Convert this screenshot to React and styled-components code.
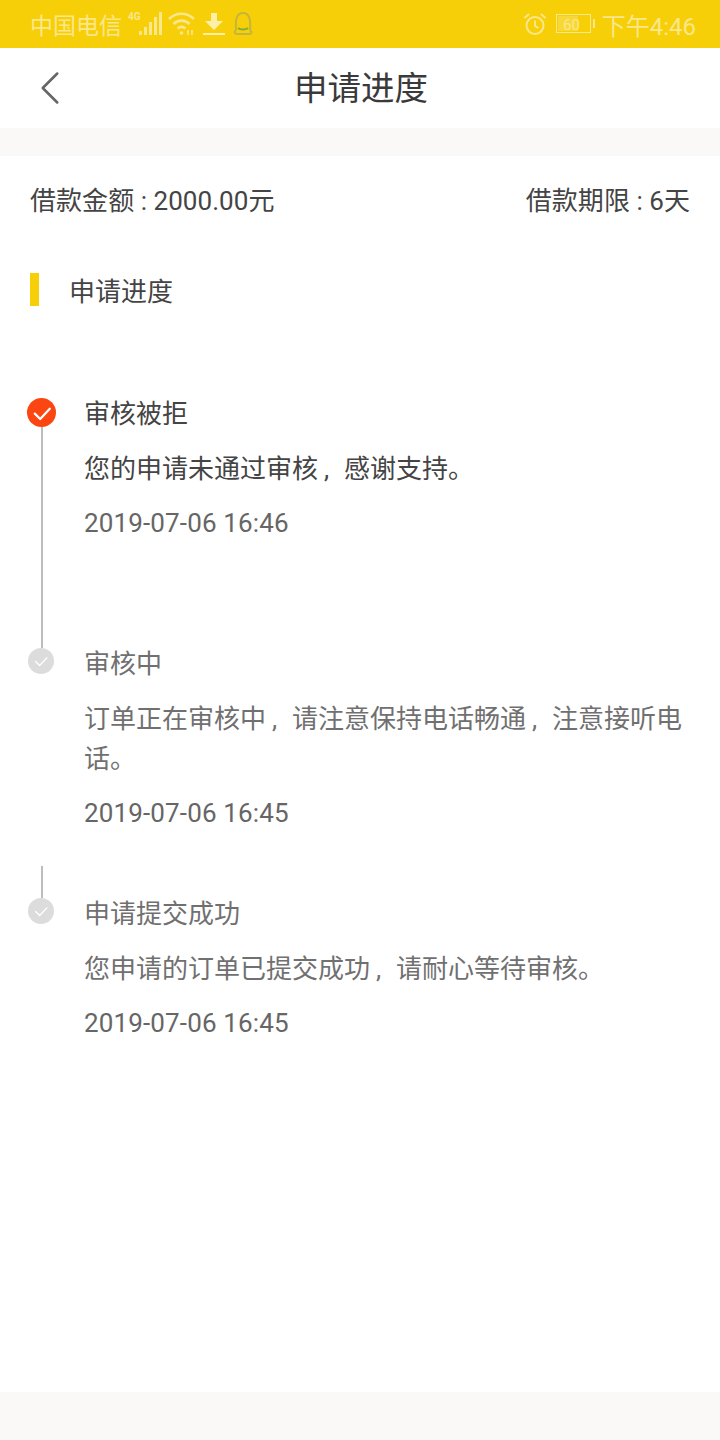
import React from 'react';
import styled, { createGlobalStyle } from 'styled-components';
import { FiChevronLeft } from 'react-icons/fi';

const GlobalStyle = createGlobalStyle`
	html, body {
		margin: 0;
		padding: 0;
		background: #ffffff;
		font-family: Roboto, "Noto Sans CJK SC", sans-serif;
	}
	* {
		box-sizing: border-box;
	}
`;

const Page = styled.div`
	width: 720px;
	height: 1440px;
	display: flex;
	flex-direction: column;
	background: #fbf8f8;
`;

const StatusBar = styled.div`
	height: 48px;
	background: #f6cf09;
	color: #fbe78b;
	display: flex;
	justify-content: space-between;
	align-items: center;
	padding: 0 24px 0 30px;
`;

const StatusGroup = styled.div`
	display: flex;
	align-items: center;
	font-size: ${(props) => props.$size || 24}px;
`;

const StatusIcon = styled.svg`
	display: block;
	margin-left: ${(props) => props.$gap || 0}px;
`;

const ClockText = styled.span`
	margin-left: 6px;
`;

const NavBar = styled.div`
	height: 80px;
	background: #ffffff;
	display: flex;
	align-items: center;
	justify-content: center;
	position: relative;
`;

const BackButton = styled.div`
	position: absolute;
	left: 21px;
	top: 11px;
	color: #666666;
	line-height: 0;
`;

const NavTitle = styled.div`
	font-size: 33.5px;
	line-height: 80px;
	padding-top: 2px;
	color: #3a3a3a;
	margin-left: 2px;
`;

const Content = styled.div`
	margin-top: 28px;
	height: 1236px;
	background: #ffffff;
	padding: 0 30px;
`;

const LoanRow = styled.div`
	height: 84px;
	display: flex;
	justify-content: space-between;
	align-items: center;
	font-size: 26px;
	letter-spacing: 0.05px;
	color: #444444;
`;

const SectionHead = styled.div`
	margin-top: 33px;
	height: 33px;
	display: flex;
	align-items: center;
	font-size: 26px;
	color: #444444;
`;

const SectionBar = styled.span`
	width: 9px;
	height: 33px;
	background: #f6cf09;
	margin-right: 30px;
`;

const Timeline = styled.div`
	margin-top: 92px;
	display: flex;
	flex-direction: column;
`;

const Step = styled.div`
	height: 250px;
	display: flex;
`;

const Marker = styled.div`
	width: 25px;
	margin-left: -2px;
	margin-right: 31px;
	display: flex;
	flex-direction: column;
	align-items: center;
	flex-shrink: 0;
`;

const Dot = styled.div`
	width: ${(props) => (props.$active ? 29 : 26)}px;
	height: ${(props) => (props.$active ? 29 : 26)}px;
	border-radius: 50%;
	background: ${(props) => (props.$active ? '#fb4612' : '#dcdcdc')};
	display: flex;
	align-items: center;
	justify-content: center;
	flex-shrink: 0;
	margin-left: ${(props) => (props.$active ? 2 : 1)}px;
`;

const Line = styled.div`
	width: 2px;
	background: #bdbdbd;
	margin-left: 2px;
	flex: ${(props) => (props.$short ? '0 0 32px' : '1')};
	margin-top: ${(props) => (props.$short ? 'auto' : '0')};
`;

const StepBody = styled.div`
	flex: 1;
	padding-top: 1px;
`;

const StepTitle = styled.div`
	font-size: 26px;
	line-height: 30px;
	color: ${(props) => (props.$active ? '#444444' : '#707070')};
`;

const StepText = styled.div`
	margin-top: 20px;
	font-size: 26px;
	line-height: 40px;
	color: ${(props) => (props.$active ? '#444444' : '#707070')};
`;

const Comma = styled.span`
	display: inline-block;
	width: 26px;
	padding-left: 6px;
`;

const StepTime = styled.div`
	margin-top: 19px;
	font-size: 26px;
	line-height: 30px;
	letter-spacing: 0.14px;
	color: #666666;
`;

const Check = ({ size, weight }) => (
	<svg width={size} height={size} viewBox="0 0 20 20" fill="none">
		<path d="M4 10.5 L8.5 15 L16.5 6.5" stroke="#ffffff" strokeWidth={weight} strokeLinecap="round" strokeLinejoin="round" />
	</svg>
);

// the comma is drawn as a narrow one inside a full CJK cell
const withCommas = (text) =>
	text.split('，').map((part, index) => (
		<React.Fragment key={part}>
			{index > 0 && <Comma>,</Comma>}
			{part}
		</React.Fragment>
	));

const steps = [
	{ title: '审核被拒', text: '您的申请未通过审核，感谢支持。', time: '2019-07-06 16:46', active: true },
	{ title: '审核中', text: '订单正在审核中，请注意保持电话畅通，注意接听电话。', time: '2019-07-06 16:45', short: true },
	{ title: '申请提交成功', text: '您申请的订单已提交成功，请耐心等待审核。', time: '2019-07-06 16:45', last: true },
];

const App = () => {
	return (
		<Page>
			<GlobalStyle />
			<StatusBar>
				<StatusGroup $size={23}>
					中国电信
					<StatusIcon $gap={6} width="36" height="30" viewBox="0 0 36 30" fill="#fbe78b">
						<text x="0" y="11" fontSize="10" fontWeight="700" fontFamily="Roboto, sans-serif">4G</text>
						<rect x="11" y="22" width="3" height="4" />
						<rect x="16" y="18" width="3" height="8" />
						<rect x="21" y="13" width="3" height="13" />
						<rect x="26" y="8" width="3" height="18" />
						<rect x="31" y="3" width="3" height="23" />
					</StatusIcon>
					<StatusIcon $gap={3} width="30" height="26" viewBox="0 0 30 26" fill="none" stroke="#fbe78b" strokeWidth="2.6">
						<path d="M2 8 C9 1 20 1 27 8" />
						<path d="M6.5 13 C11 8.5 18 8.5 22.5 13" />
						<path d="M10.5 17.5 C13 15.5 16 15.5 18.5 17.5" />
						<circle cx="14.5" cy="22" r="1.8" fill="#fbe78b" stroke="none" />
						<path d="M21 19 V24 M25 19 V24" strokeWidth="1.6" />
					</StatusIcon>
					<StatusIcon $gap={6} width="22" height="24" viewBox="0 0 22 24" fill="#fdeea8">
						<path d="M8 1 H14 V9 H20 L11 18 L2 9 H8 Z" />
						<rect x="0" y="21" width="22" height="2" />
					</StatusIcon>
					<StatusIcon $gap={7} width="22" height="26" viewBox="0 0 22 26" fill="none" stroke="#c5b53a" strokeWidth="2">
						<path d="M4 19 C3 8 5 2 11 2 C17 2 19 8 18 19" />
						<path d="M4 19 C2 21 2 23 6 23 C9 23 14 23 17 23 C20 23 20 21 18 19" />
						<path d="M6 17 C8 19 14 19 16 17" stroke="#7fae3c" />
					</StatusIcon>
				</StatusGroup>
				<StatusGroup>
					<StatusIcon width="24" height="24" viewBox="0 0 24 24" fill="none" stroke="#fbe78b" strokeWidth="2">
						<circle cx="12" cy="13.5" r="8.5" />
						<path d="M12 8.5 V14 L15.5 16" />
						<path d="M1.5 6 L6 2" />
						<path d="M22.5 6 L18 2" />
					</StatusIcon>
					<StatusIcon $gap={9} width="40" height="20" viewBox="0 0 40 20" fill="none">
						<rect x="0.5" y="0.5" width="34" height="18" stroke="#fbe78b" />
						<rect x="2" y="2" width="20" height="15" fill="#fbe78b" opacity="0.35" />
						<text x="7" y="15.5" fontSize="15" fill="#fbe78b" fontFamily="Roboto, sans-serif">60</text>
						<rect x="37" y="5" width="2" height="9" fill="#fbe78b" />
					</StatusIcon>
					<ClockText>下午4:46</ClockText>
				</StatusGroup>
			</StatusBar>
			<NavBar>
				<BackButton>
					<FiChevronLeft size={58} strokeWidth={1.05} />
				</BackButton>
				<NavTitle>申请进度</NavTitle>
			</NavBar>
			<Content>
				<LoanRow>
					<span>借款金额 : 2000.00元</span>
					<span>借款期限 : 6天</span>
				</LoanRow>
				<SectionHead>
					<SectionBar />
					申请进度
				</SectionHead>
				<Timeline>
					{steps.map((step) => (
						<Step key={step.title}>
							<Marker>
								<Dot $active={step.active}>
									<Check size={step.active ? 24 : 18} weight={step.active ? 1.9 : 1.5} />
								</Dot>
								{!step.last && <Line $short={step.short} />}
							</Marker>
							<StepBody>
								<StepTitle $active={step.active}>{step.title}</StepTitle>
								<StepText $active={step.active}>{withCommas(step.text)}</StepText>
								<StepTime>{step.time}</StepTime>
							</StepBody>
						</Step>
					))}
				</Timeline>
			</Content>
		</Page>
	);
};

export default App;
